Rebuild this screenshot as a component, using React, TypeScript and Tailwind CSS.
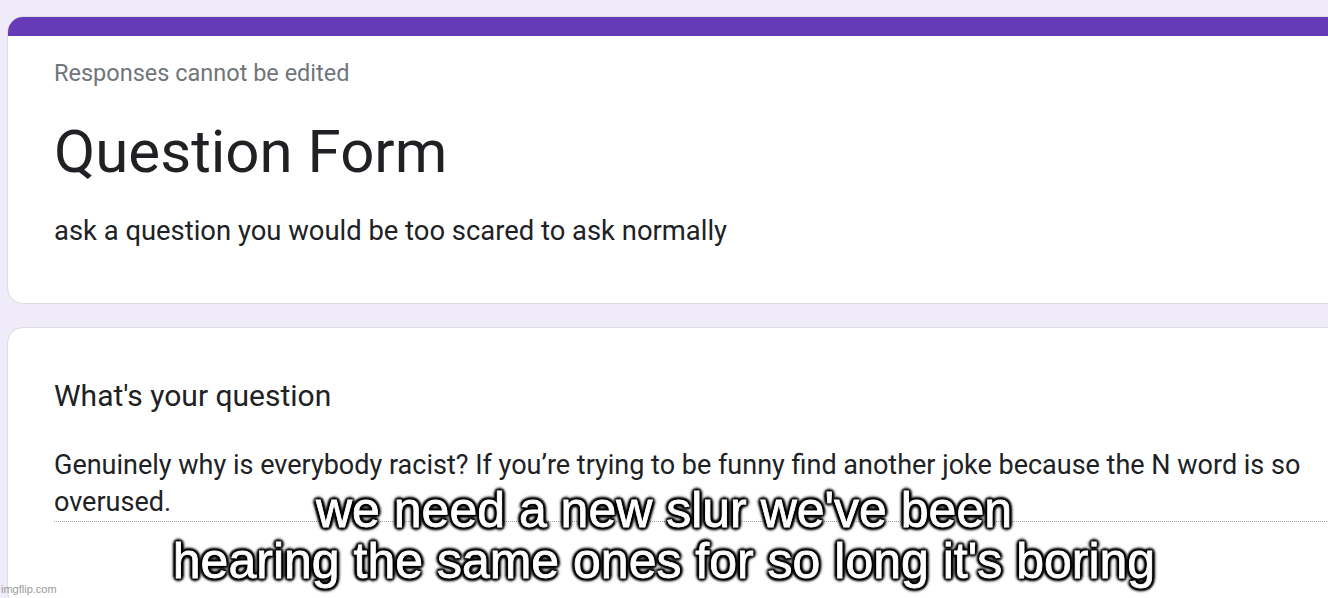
export default function App() {
  return (
    <div className="relative h-[598px] w-[1328px] overflow-hidden bg-[#f0ebf8] font-['Roboto',sans-serif]">
      <div className="flex flex-col gap-[23px] pl-[7px] pt-[16px]">
        <div className="h-[288px] w-[1340px] overflow-hidden rounded-[16px] border border-[#dadce0] bg-white">
          <div className="h-[19px] bg-[#673ab7]" />
          <div className="px-[46px] pt-[22px]">
            <p className="text-[23.5px] leading-[30px] text-[#70757a]">Responses cannot be edited</p>
            <h1 className="mt-[29px] text-[60px] leading-[70px] text-[#202124]">Question Form</h1>
            <p className="mt-[26px] text-[27.4px] leading-[36px] text-[#202124]">
              ask a question you would be too scared to ask normally
            </p>
          </div>
        </div>
        <div className="h-[280px] w-[1340px] rounded-[16px] border border-[#dadce0] bg-white">
          <div className="px-[46px] pt-[48px]">
            <p className="text-[30px] leading-[40px] text-[#202124]">What's your question</p>
            <div className="mt-[31px] w-[1273px] border-b border-dotted border-[#9aa0a6]">
              <p className="w-[1270px] text-[27px] leading-[37px] text-[#202124]">
                Genuinely why is everybody racist? If you’re trying to be funny find another joke because the N word is so overused.
              </p>
            </div>
          </div>
        </div>
      </div>

      <div className="absolute left-0 right-0 top-[485px] text-center font-['Liberation_Sans',Arial,sans-serif] text-[50px] leading-[51px] text-white [-webkit-text-stroke:0.8px_white] [text-shadow:2px_2px_2px_#000,-2px_-2px_2px_#000,2px_-2px_2px_#000,-2px_2px_2px_#000,0_3px_3px_#000,0_-3px_3px_#000,3px_0_3px_#000,-3px_0_3px_#000]">
        <p>we need a new slur we've been</p>
        <p>hearing the same ones for so long it's boring</p>
      </div>

      <div className="absolute bottom-[3px] left-[1px] font-['Liberation_Sans',Arial,sans-serif] text-[11px] leading-[12px] text-[#9a9a9a]">
        imgflip.com
      </div>
    </div>
  );
}
